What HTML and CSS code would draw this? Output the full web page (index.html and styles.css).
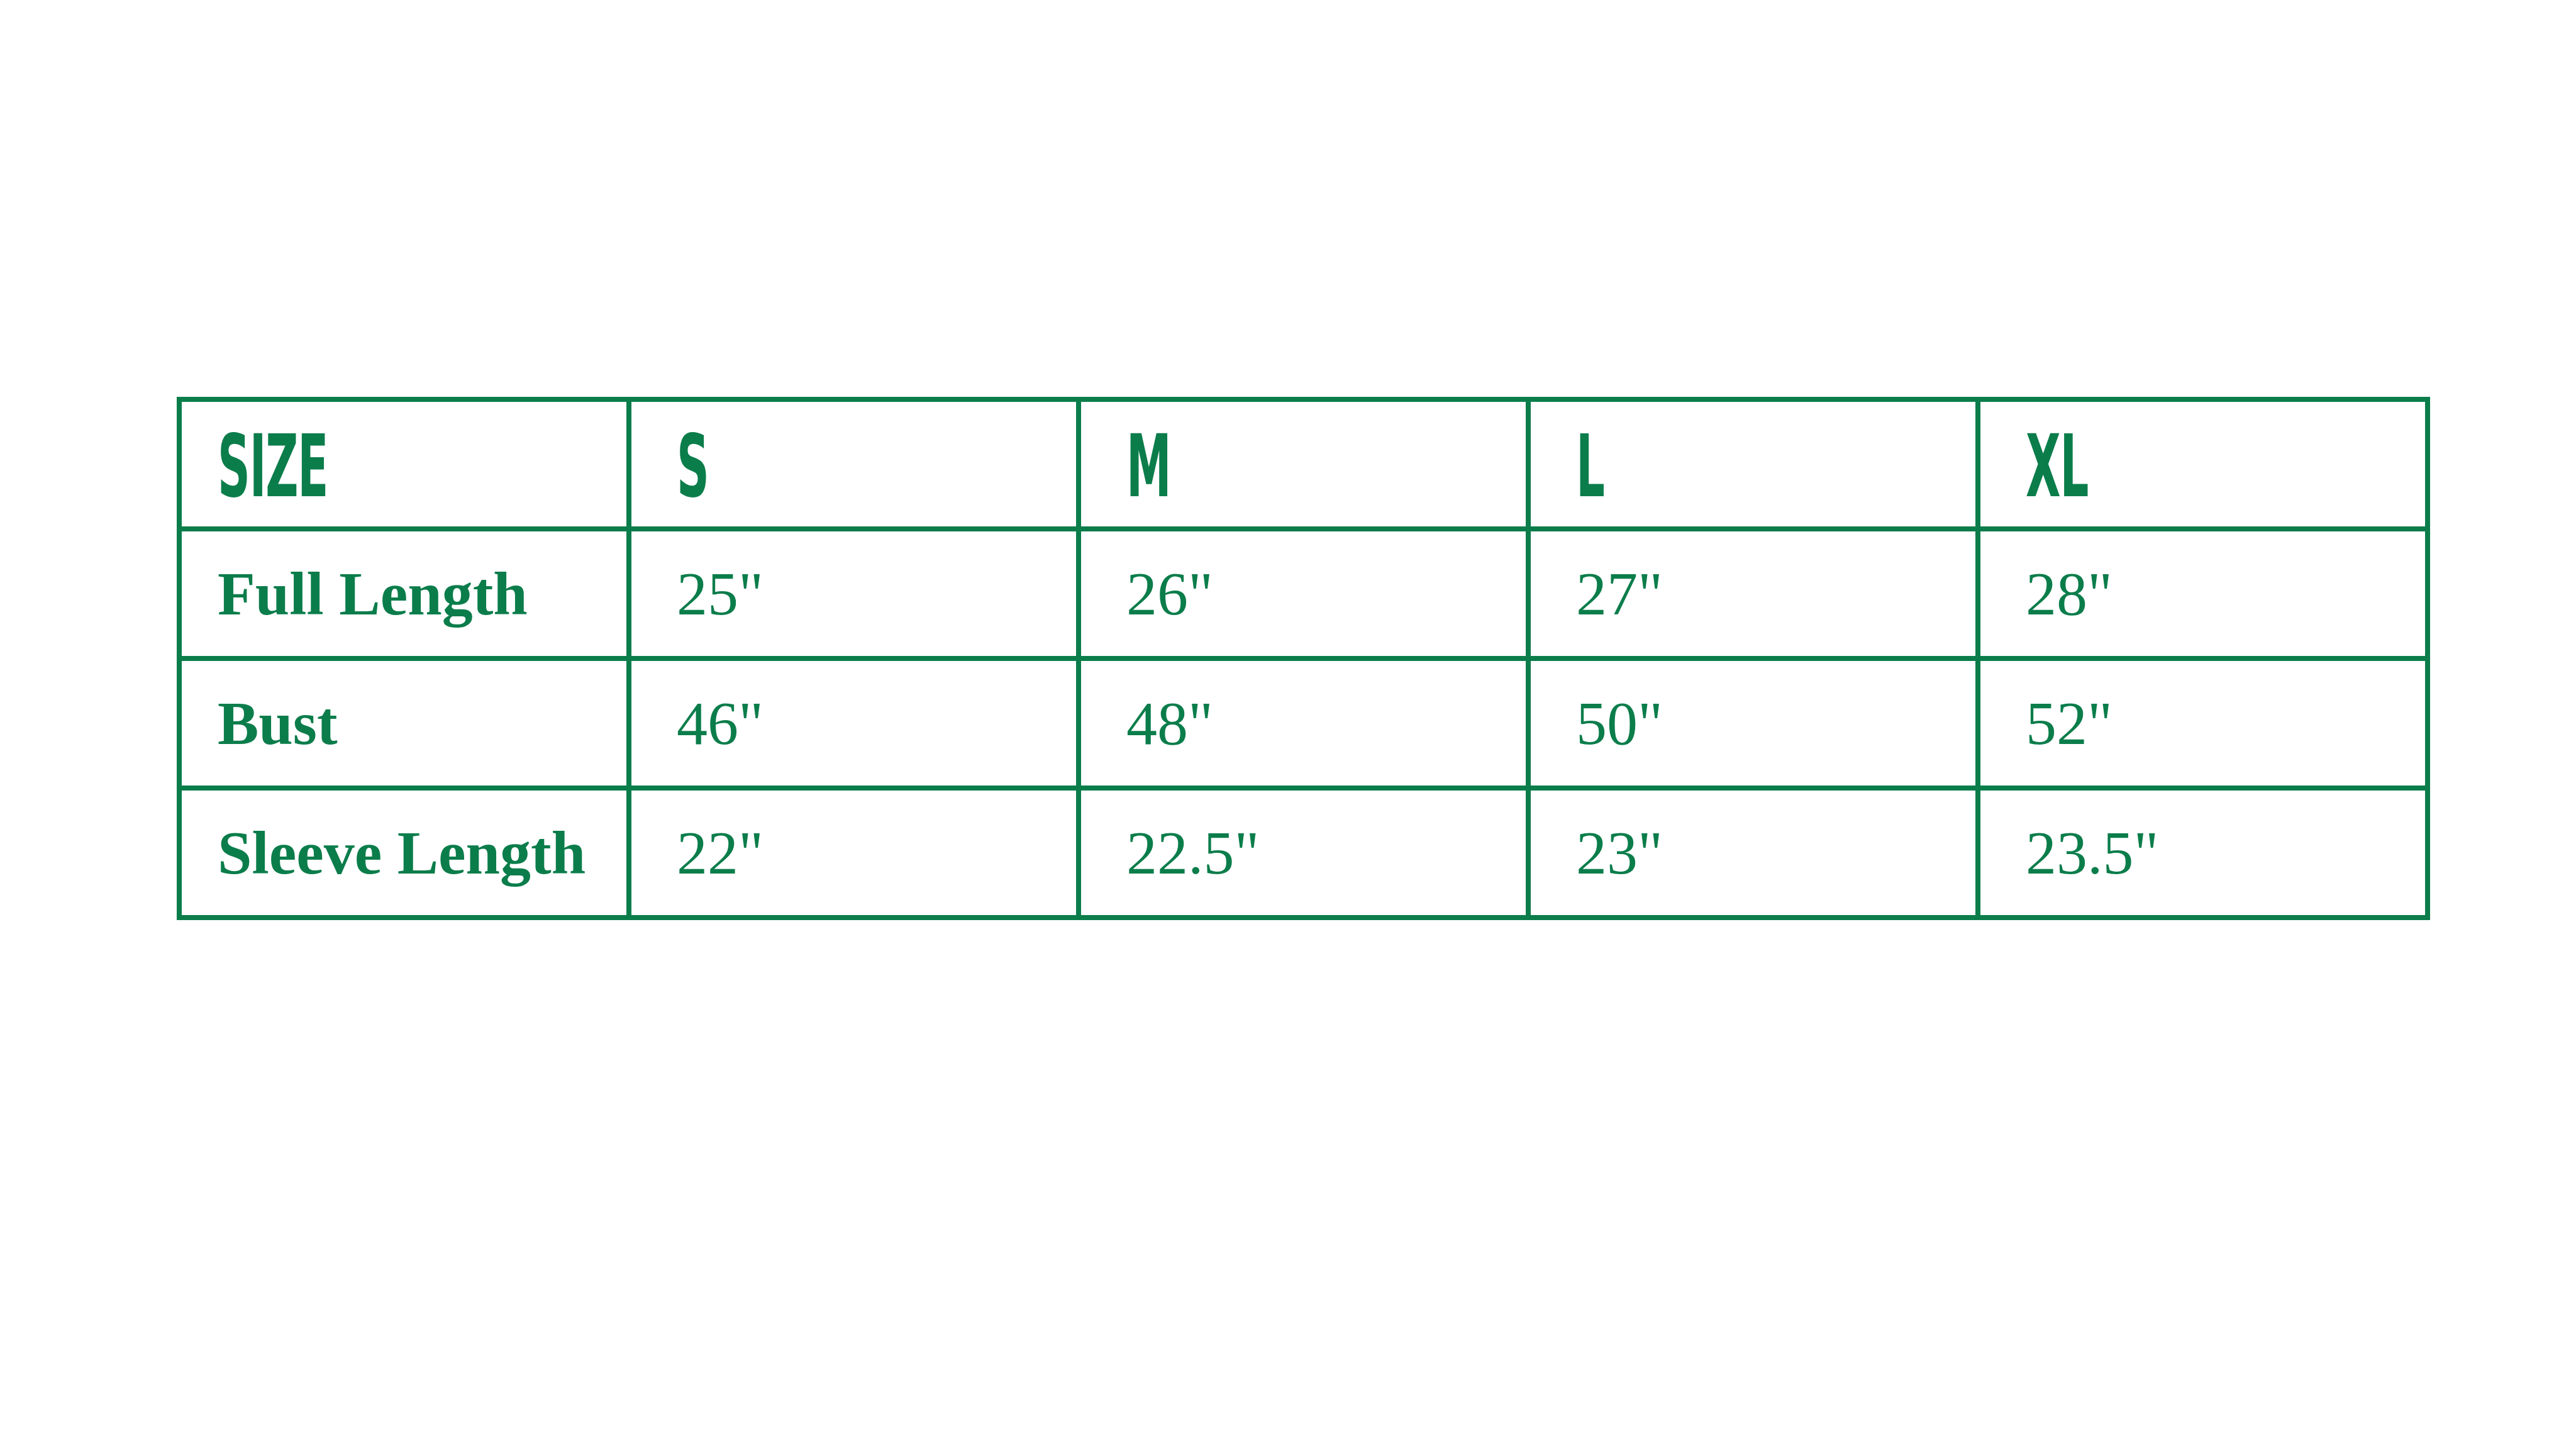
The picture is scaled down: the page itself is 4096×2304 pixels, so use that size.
FILE: index.html
```html
<!DOCTYPE html>
<html lang="en">
<head>
<meta charset="utf-8">
<title>Size Chart</title>
<link rel="stylesheet" href="styles.css">
</head>
<body>
<main class="page">
  <div class="chart" role="table" aria-label="Size chart">
    <div class="cell head first" role="columnheader"><span class="cap">SIZE</span></div>
    <div class="cell head" role="columnheader"><span class="cap">S</span></div>
    <div class="cell head" role="columnheader"><span class="cap">M</span></div>
    <div class="cell head" role="columnheader"><span class="cap">L</span></div>
    <div class="cell head" role="columnheader"><span class="cap">XL</span></div>

    <div class="cell label first" role="rowheader">Full Length</div>
    <div class="cell val" role="cell">25"</div>
    <div class="cell val" role="cell">26"</div>
    <div class="cell val" role="cell">27"</div>
    <div class="cell val" role="cell">28"</div>

    <div class="cell label first" role="rowheader">Bust</div>
    <div class="cell val" role="cell">46"</div>
    <div class="cell val" role="cell">48"</div>
    <div class="cell val" role="cell">50"</div>
    <div class="cell val" role="cell">52"</div>

    <div class="cell label first" role="rowheader">Sleeve Length</div>
    <div class="cell val" role="cell">22"</div>
    <div class="cell val" role="cell">22.5"</div>
    <div class="cell val" role="cell">23"</div>
    <div class="cell val" role="cell">23.5"</div>
  </div>
</main>
</body>
</html>
```

FILE: styles.css
```css
html, body {
  margin: 0;
  padding: 0;
  background: #ffffff;
}

.page {
  width: 4096px;
  height: 2304px;
  box-sizing: border-box;
  padding: 631px 0 0 281px;
}

.chart {
  display: inline-grid;
  grid-template-columns: repeat(5, 707px);
  grid-template-rows: repeat(4, 198px);
  gap: 8px;
  padding: 8px;
  background: #0b7d4b;
}

.cell {
  background: #ffffff;
  display: flex;
  align-items: center;
  padding-left: 72px;
  color: #0b7d4b;
  white-space: nowrap;
  overflow: hidden;
}

.cell.first {
  padding-left: 57px;
}

.head {
  font-family: "Liberation Sans Narrow", "DejaVu Sans Condensed", "Liberation Sans", sans-serif;
  font-weight: 700;
  font-size: 138px;
  padding-top: 6px;
  box-sizing: border-box;
}

.head .cap {
  display: inline-block;
  transform: scaleX(0.58);
  transform-origin: left center;
  letter-spacing: -2px;
}

.label {
  font-family: "Liberation Serif", serif;
  font-weight: 700;
  font-size: 98px;
}

.val {
  font-family: "Liberation Serif", serif;
  font-weight: 400;
  font-size: 98px;
}
```
